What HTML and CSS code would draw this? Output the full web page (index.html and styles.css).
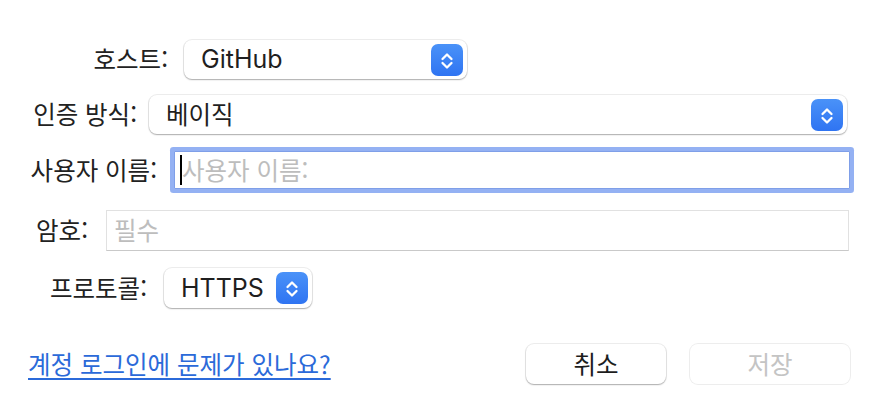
FILE: index.html
```html
<!DOCTYPE html>
<html lang="ko">
<head>
<meta charset="utf-8">
<title>계정</title>
<link rel="stylesheet" href="styles.css">
</head>
<body>
<div class="dialog">
  <div class="row row--host">
    <span class="lbl">호스트:</span>
    <div class="popup popup--host">
      <span class="popup-value">GitHub</span>
      <span class="stepper"><svg viewBox="0 0 32 32" width="32" height="32"><path d="M11.5 15 L16 10.5 L20.5 15 M11.5 19 L16 23.5 L20.5 19" fill="none" stroke="#fff" stroke-width="2.3" stroke-linecap="round" stroke-linejoin="round"/></svg></span>
    </div>
  </div>
  <div class="row row--auth">
    <span class="lbl">인증 방식:</span>
    <div class="popup popup--auth">
      <span class="popup-value popup-value--ko">베이직</span>
      <span class="stepper"><svg viewBox="0 0 32 32" width="32" height="32"><path d="M11.5 15 L16 10.5 L20.5 15 M11.5 19 L16 23.5 L20.5 19" fill="none" stroke="#fff" stroke-width="2.3" stroke-linecap="round" stroke-linejoin="round"/></svg></span>
    </div>
  </div>
  <div class="row row--user">
    <span class="lbl">사용자 이름:</span>
    <div class="field field--focus">
      <span class="caret"></span><span class="placeholder">사용자 이름:</span>
    </div>
  </div>
  <div class="row row--pass">
    <span class="lbl">암호:</span>
    <div class="field field--plain">
      <span class="placeholder">필수</span>
    </div>
  </div>
  <div class="row row--proto">
    <span class="lbl">프로토콜:</span>
    <div class="popup popup--proto">
      <span class="popup-value">HTTPS</span>
      <span class="stepper"><svg viewBox="0 0 32 32" width="32" height="32"><path d="M11.5 15 L16 10.5 L20.5 15 M11.5 19 L16 23.5 L20.5 19" fill="none" stroke="#fff" stroke-width="2.3" stroke-linecap="round" stroke-linejoin="round"/></svg></span>
    </div>
  </div>
  <div class="footer">
    <a class="help" href="#">계정 로그인에 문제가 있나요?</a>
    <div class="buttons">
      <button class="btn btn--cancel">취소</button>
      <button class="btn btn--save" disabled>저장</button>
    </div>
  </div>
</div>
</body>
</html>
```

FILE: styles.css
```css
html, body {
  margin: 0;
  padding: 0;
  background: #ffffff;
}

body {
  font-family: "Inter", "Noto Sans CJK KR", sans-serif;
  color: #262626;
}

.dialog {
  width: 869px;
  height: 414px;
  box-sizing: border-box;
  padding-top: 40px;
  display: flex;
  flex-direction: column;
}

.row {
  display: flex;
  align-items: center;
}

.lbl {
  font-family: "Noto Sans CJK KR", sans-serif;
  font-size: 24.5px;
  line-height: 1;
  text-align: right;
  white-space: nowrap;
  color: #222222;
  flex: none;
}

.row--host { height: 39px; }
.row--host .lbl { width: 168px; margin-right: 16px; }

.row--auth { height: 39px; margin-top: 16px; }
.row--auth .lbl { width: 137px; margin-right: 12px; }

.row--user { height: 46px; margin-top: 13px; }
.row--user .lbl { width: 157px; margin-right: 17px; }

.row--pass { height: 41px; margin-top: 17px; }
.row--pass .lbl { width: 88px; margin-right: 18px; }

.row--proto { height: 40px; margin-top: 17px; }
.row--proto .lbl { width: 147px; margin-right: 17px; }

/* popup buttons */
.popup {
  height: 100%;
  box-sizing: border-box;
  display: flex;
  align-items: center;
  justify-content: space-between;
  background: #fff;
  border-radius: 8px;
  box-shadow: 0 0 0 1px rgba(0, 0, 0, 0.07), 0 1px 1.5px rgba(0, 0, 0, 0.28);
  padding-left: 17px;
  padding-right: 4px;
}

.popup--host { width: 283px; }
.popup--auth { flex: 1; margin-right: 22px; }
.popup--proto { gap: 12px; }

.popup-value {
  font-size: 25px;
  line-height: 1;
  color: #1f1f1f;
  white-space: nowrap;
}

.popup-value--ko {
  font-family: "Noto Sans CJK KR", sans-serif;
  font-size: 24.5px;
}

.stepper {
  width: 32px;
  height: 32px;
  border-radius: 7px;
  background: linear-gradient(#4a92f8, #2f74f2);
  display: flex;
  flex: none;
}

.stepper svg {
  display: block;
}

/* text fields */
.field {
  box-sizing: border-box;
  display: flex;
  align-items: center;
  background: #fff;
}

.field--focus {
  height: 38px;
  flex: 1;
  margin-right: 19px;
  border: 1px solid #7f9fe8;
  border-radius: 1px;
  box-shadow: 0 0 0 4px #94b1f3;
  padding-left: 5px;
}

.field--plain {
  height: 41px;
  flex: 1;
  margin-right: 20px;
  border: 1px solid #e1e1e1;
  border-bottom-color: #c9c9c9;
  padding-left: 7px;
}

.caret {
  width: 2px;
  height: 30px;
  background: #000;
  flex: none;
}

.placeholder {
  font-family: "Noto Sans CJK KR", sans-serif;
  font-size: 24.5px;
  line-height: 1;
  color: #bdbdbd;
  white-space: nowrap;
}

/* footer */
.footer {
  margin-top: 36px;
  height: 40px;
  display: flex;
  align-items: center;
  justify-content: space-between;
  padding-left: 28px;
  padding-right: 19px;
}

.help {
  font-family: "Noto Sans CJK KR", sans-serif;
  font-size: 24.5px;
  line-height: 1;
  color: #2b6ad9;
  text-decoration: underline;
  text-decoration-thickness: 2px;
  text-underline-offset: 4px;
}

.buttons {
  display: flex;
  gap: 24px;
  height: 100%;
}

.btn {
  font-family: "Noto Sans CJK KR", sans-serif;
  font-size: 24.5px;
  line-height: 1;
  height: 40px;
  border: none;
  border-radius: 8px;
  background: #fff;
  padding: 0;
  margin: 0;
}

.btn--cancel {
  width: 140px;
  color: #1d1d1d;
  box-shadow: 0 0 0 1px rgba(0, 0, 0, 0.07), 0 1px 1.5px rgba(0, 0, 0, 0.28);
}

.btn--save {
  width: 160px;
  color: #c4c4c4;
  box-shadow: 0 0 0 1px rgba(0, 0, 0, 0.07);
}
```
